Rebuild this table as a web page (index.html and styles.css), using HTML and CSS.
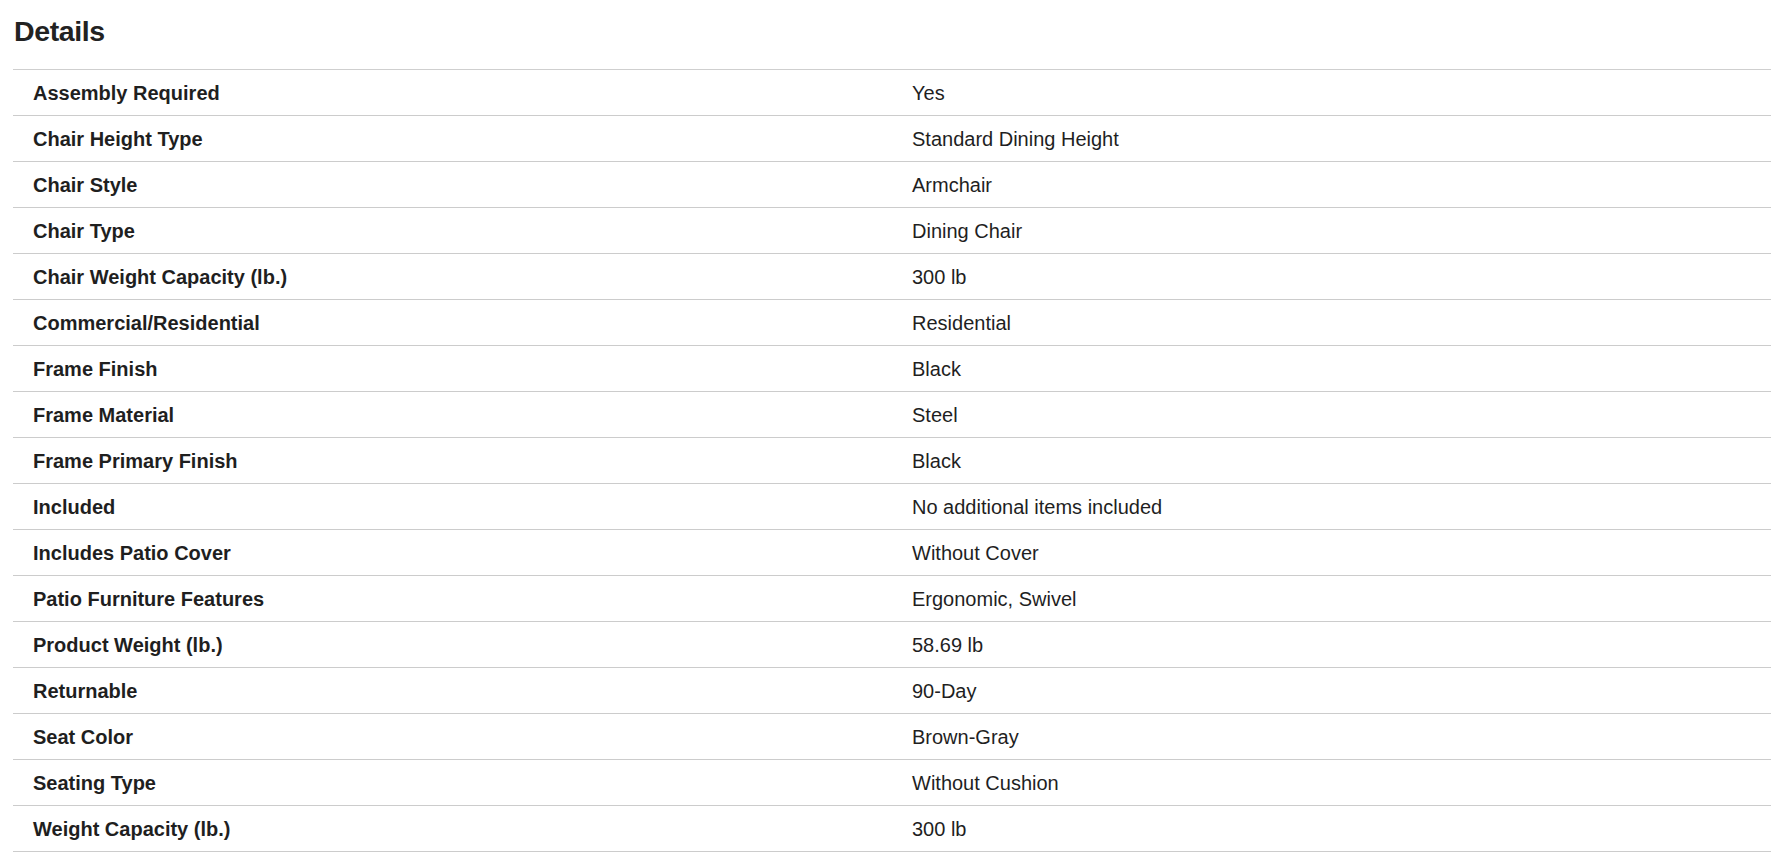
FILE: index.html
```html
<!DOCTYPE html>
<html lang="en">
<head>
<meta charset="utf-8">
<title>Details</title>
<link rel="stylesheet" href="styles.css">
</head>
<body>
<section class="details">
  <h2 class="details-title">Details</h2>
  <table class="spec-table">
    <tbody>
      <tr><th>Assembly Required</th><td>Yes</td></tr>
      <tr><th>Chair Height Type</th><td>Standard Dining Height</td></tr>
      <tr><th>Chair Style</th><td>Armchair</td></tr>
      <tr><th>Chair Type</th><td>Dining Chair</td></tr>
      <tr><th>Chair Weight Capacity (lb.)</th><td>300 lb</td></tr>
      <tr><th>Commercial/Residential</th><td>Residential</td></tr>
      <tr><th>Frame Finish</th><td>Black</td></tr>
      <tr><th>Frame Material</th><td>Steel</td></tr>
      <tr><th>Frame Primary Finish</th><td>Black</td></tr>
      <tr><th>Included</th><td>No additional items included</td></tr>
      <tr><th>Includes Patio Cover</th><td>Without Cover</td></tr>
      <tr><th>Patio Furniture Features</th><td>Ergonomic, Swivel</td></tr>
      <tr><th>Product Weight (lb.)</th><td>58.69 lb</td></tr>
      <tr><th>Returnable</th><td>90-Day</td></tr>
      <tr><th>Seat Color</th><td>Brown-Gray</td></tr>
      <tr><th>Seating Type</th><td>Without Cushion</td></tr>
      <tr><th>Weight Capacity (lb.)</th><td>300 lb</td></tr>
    </tbody>
  </table>
</section>
</body>
</html>
```
FILE: styles.css
```css
html, body {
  margin: 0;
  padding: 0;
  background: #fff;
}
body {
  font-family: "Liberation Sans", Arial, Helvetica, sans-serif;
  color: #1f1f1f;
}
.details {
  padding: 0 14px 0 13px;
}
.details-title {
  margin: 0;
  padding: 14px 0 0 1px;
  height: 69px;
  box-sizing: border-box;
  font-size: 28.5px;
  line-height: 34px;
  font-weight: 700;
  letter-spacing: -0.4px;
  color: #222;
}
.spec-table {
  width: 100%;
  border-collapse: collapse;
  table-layout: fixed;
  border-top: 1px solid #cfcfcf;
}
.spec-table tr {
  border-bottom: 1px solid #cccccc;
}
.spec-table th,
.spec-table td {
  width: 50%;
  height: 46px;
  padding: 0 20px;
  box-sizing: border-box;
  text-align: left;
  vertical-align: middle;
  font-size: 20px;
  line-height: 24px;
  color: #1f1f1f;
}
.spec-table th {
  font-weight: 700;
}
.spec-table td {
  font-weight: 400;
}
```
